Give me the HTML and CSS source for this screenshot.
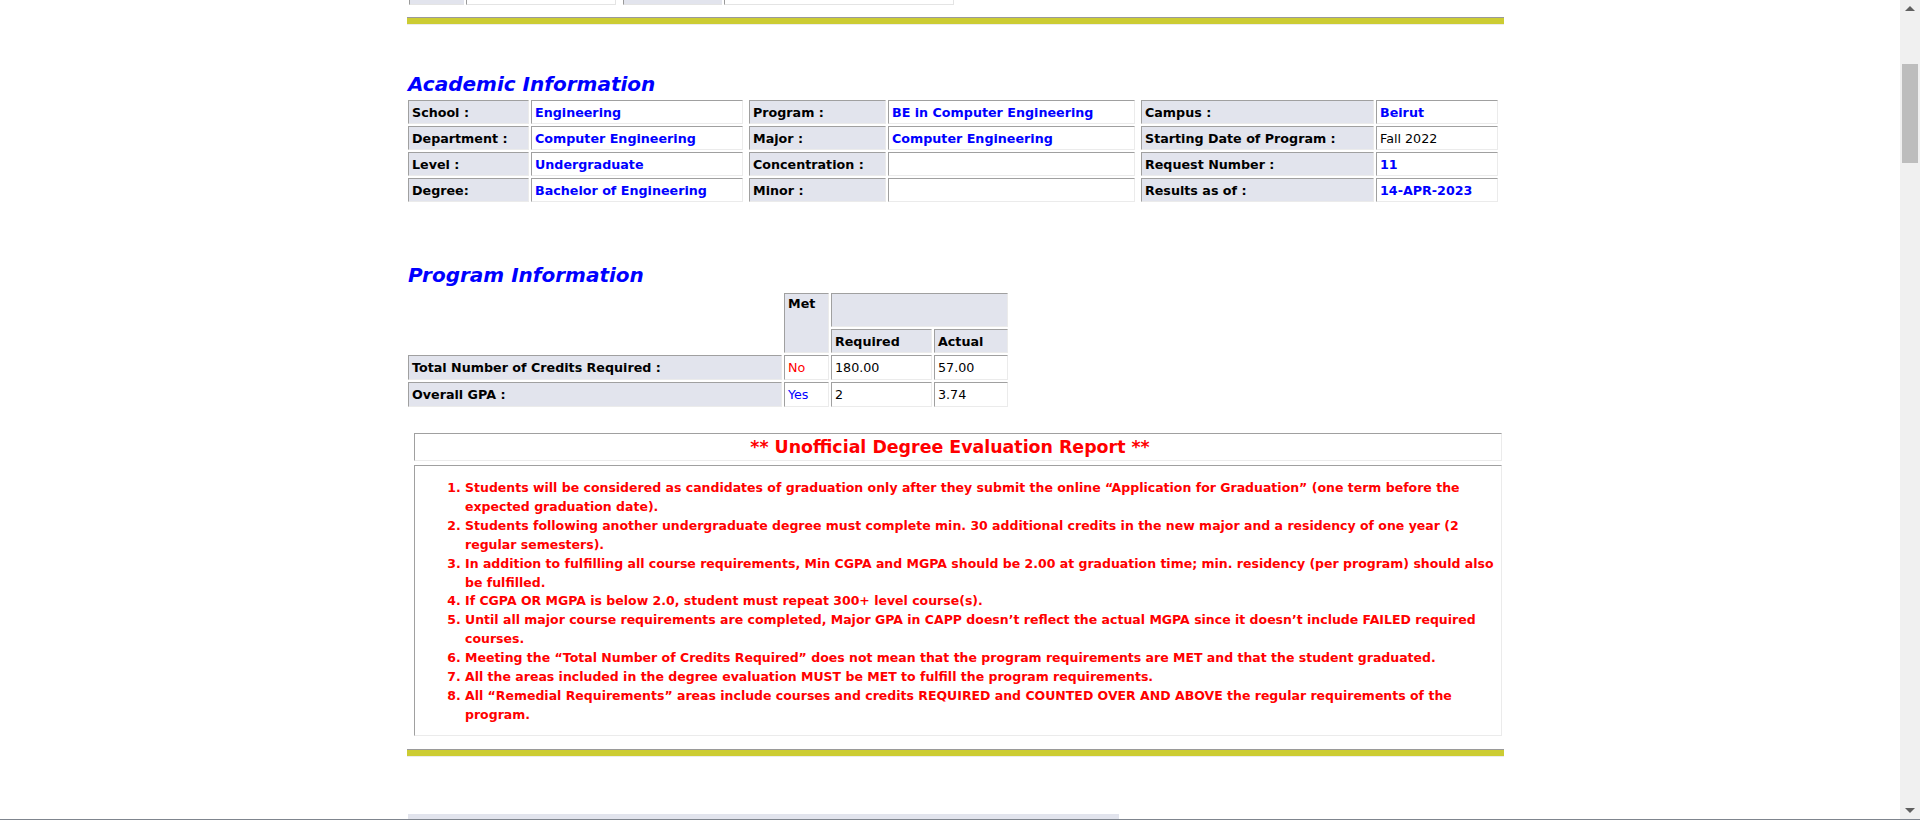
FILE: index.html
```html
<!DOCTYPE html>
<html lang="en">
<head>
<meta charset="utf-8">
<title>Degree Evaluation</title>
<link rel="stylesheet" href="styles.css">
</head>
<body>
<div class="window">
  <main class="page">
    <div class="content">
      <div class="prev-row">
        <span class="prev-cell label w1"></span>
        <span class="prev-cell value w2"></span>
        <span class="prev-cell label w3"></span>
        <span class="prev-cell value w4"></span>
      </div>
      <div class="rule rule-top"></div>

      <h2 class="section-title academic-title">Academic Information</h2>
      <table class="datatable academic">
        <colgroup>
          <col class="c-a1"><col class="c-a2"><col class="c-sp"><col class="c-a3"><col class="c-a4"><col class="c-sp"><col class="c-a5"><col class="c-a6">
        </colgroup>
        <tr>
          <th class="lbl">School :</th><td class="val hl">Engineering</td><td class="sp"></td>
          <th class="lbl">Program :</th><td class="val hl">BE in Computer Engineering</td><td class="sp"></td>
          <th class="lbl">Campus :</th><td class="val hl">Beirut</td>
        </tr>
        <tr>
          <th class="lbl">Department :</th><td class="val hl">Computer Engineering</td><td class="sp"></td>
          <th class="lbl">Major :</th><td class="val hl">Computer Engineering</td><td class="sp"></td>
          <th class="lbl">Starting Date of Program :</th><td class="val">Fall 2022</td>
        </tr>
        <tr>
          <th class="lbl">Level :</th><td class="val hl">Undergraduate</td><td class="sp"></td>
          <th class="lbl">Concentration :</th><td class="val"></td><td class="sp"></td>
          <th class="lbl">Request Number :</th><td class="val hl">11</td>
        </tr>
        <tr>
          <th class="lbl">Degree:</th><td class="val hl">Bachelor of Engineering</td><td class="sp"></td>
          <th class="lbl">Minor :</th><td class="val"></td><td class="sp"></td>
          <th class="lbl">Results as of :</th><td class="val hl">14-APR-2023</td>
        </tr>
      </table>

      <h2 class="section-title program-title">Program Information</h2>
      <table class="datatable program">
        <colgroup>
          <col class="c-p1"><col class="c-p2"><col class="c-p3"><col class="c-p4">
        </colgroup>
        <tr class="head-top">
          <th class="blank" rowspan="2"></th>
          <th class="lbl met" rowspan="2">Met</th>
          <th class="lbl" colspan="2"></th>
        </tr>
        <tr>
          <th class="lbl">Required</th>
          <th class="lbl">Actual</th>
        </tr>
        <tr class="data-row">
          <th class="lbl">Total Number of Credits Required :</th>
          <td class="val no">No</td>
          <td class="val">180.00</td>
          <td class="val">57.00</td>
        </tr>
        <tr class="data-row">
          <th class="lbl">Overall GPA :</th>
          <td class="val yes">Yes</td>
          <td class="val">2</td>
          <td class="val">3.74</td>
        </tr>
      </table>

      <section class="report">
        <div class="report-head">** Unofficial Degree Evaluation Report **</div>
        <div class="report-body">
          <ol class="report-list">
            <li>Students will be considered as candidates of graduation only after they submit the online “Application for Graduation” (one term before the expected graduation date).</li>
            <li>Students following another undergraduate degree must complete min. 30 additional credits in the new major and a residency of one year (2 regular semesters).</li>
            <li>In addition to fulfilling all course requirements, Min CGPA and MGPA should be 2.00 at graduation time; min. residency (per program) should also be fulfilled.</li>
            <li>If CGPA OR MGPA is below 2.0, student must repeat 300+ level course(s).</li>
            <li>Until all major course requirements are completed, Major GPA in CAPP doesn’t reflect the actual MGPA since it doesn’t include FAILED required courses.</li>
            <li>Meeting the “Total Number of Credits Required” does not mean that the program requirements are MET and that the student graduated.</li>
            <li>All the areas included in the degree evaluation MUST be MET to fulfill the program requirements.</li>
            <li>All “Remedial Requirements” areas include courses and credits REQUIRED and COUNTED OVER AND ABOVE the regular requirements of the program.</li>
          </ol>
        </div>
      </section>

      <div class="rule rule-bottom"></div>
      <div class="next-row"><span class="next-cell"></span></div>
    </div>
  </main>
  <div class="scrollbar" aria-hidden="true">
    <div class="sb-btn">
      <svg width="10" height="6" viewBox="0 0 10 6"><polygon points="0,5 5,0 10,5" fill="#606060"/></svg>
    </div>
    <div class="sb-thumb"></div>
    <div class="sb-fill"></div>
    <div class="sb-btn">
      <svg width="10" height="6" viewBox="0 0 10 6"><polygon points="0,0 10,0 5,5" fill="#606060"/></svg>
    </div>
  </div>
</div>
</body>
</html>
```

FILE: styles.css
```css
html, body {
  margin: 0;
  padding: 0;
  height: 100%;
  overflow: hidden;
  background: #ffffff;
}

body {
  font-family: "DejaVu Sans", Verdana, sans-serif;
  font-size: 12.7px;
  color: #000000;
}

.window {
  display: flex;
  height: 819px;
  border-bottom: 1px solid #7f858e;
}

.page {
  flex: 1;
  overflow: hidden;
}

.content {
  width: 1098px;
  margin-left: 406px;
}

/* tail of the previous table */
.prev-row {
  display: flex;
  height: 5px;
  padding-left: 3px;
}

.prev-cell {
  box-sizing: border-box;
  height: 5px;
  border-left: 1px solid #9a9a9a;
  border-bottom: 1px solid #e4e4e4;
}

.prev-cell.label { background: #e2e4ed; }
.prev-cell.value { border-right: 1px solid #e4e4e4; }
.prev-cell.w1 { width: 55px; margin-right: 2px; }
.prev-cell.w2 { width: 150px; margin-right: 7px; }
.prev-cell.w3 { width: 99px; margin-right: 2px; }
.prev-cell.w4 { width: 230px; }

/* yellow separator */
.rule {
  margin-left: 1px;
  width: 1097px;
  height: 6px;
  background: #cccc33;
  border-top: 1px solid #9a9a9a;
  border-bottom: 1px solid #ececec;
}

.rule-top { margin-top: 12px; }
.rule-bottom { margin-top: 13px; }

/* section headings */
.section-title {
  margin: 0 0 0 2px;
  font-size: 20px;
  line-height: 17px;
  font-weight: bold;
  font-style: italic;
  color: #0000ff;
}

.academic-title { margin-top: 51px; }
.program-title { margin-top: 63px; }

/* data tables */
.datatable {
  border-collapse: separate;
  border-spacing: 2px;
  table-layout: fixed;
}

.datatable tr { height: 24px; }

.datatable th,
.datatable td {
  padding: 0 3px;
  border-style: solid;
  border-width: 1px;
  border-color: #a0a0a0 #ebebeb #ebebeb #a0a0a0;
  text-align: left;
  vertical-align: middle;
  white-space: nowrap;
  overflow: hidden;
}

.datatable .lbl {
  background: #e2e4ed;
  font-weight: bold;
}

.datatable .val {
  background: #ffffff;
  font-weight: normal;
}

.datatable .val.hl {
  color: #0000ff;
  font-weight: bold;
}

.datatable .sp,
.datatable .blank {
  border: 0;
  padding: 0;
  background: transparent;
}

.academic { width: 1094px; margin-top: 5px; }
.c-a1 { width: 121px; }
.c-a2 { width: 212px; }
.c-sp { width: 2px; }
.c-a3 { width: 137px; }
.c-a4 { width: 247px; }
.c-a5 { width: 233px; }
.c-a6 { width: 122px; }

.program { width: 604px; margin-top: 7px; }
.program .head-top { height: 34px; }
.program .data-row { height: 25px; }
.c-p1 { width: 374px; }
.c-p2 { width: 45px; }
.c-p3 { width: 101px; }
.c-p4 { width: 74px; }

.datatable .met {
  vertical-align: top;
  padding-top: 2px;
}

.datatable .no { color: #ff0000; }
.datatable .yes { color: #0000ff; }

/* report notice */
.report {
  margin: 24px 0 0 8px;
  width: 1088px;
}

.report-head,
.report-body {
  box-sizing: border-box;
  border-style: solid;
  border-width: 1px;
  border-color: #a0a0a0 #ebebeb #ebebeb #a0a0a0;
}

.report-head {
  height: 28px;
  line-height: 26px;
  padding-right: 16px;
  text-align: center;
  color: #ff0000;
  font-size: 17.4px;
  font-weight: bold;
}

.report-body {
  margin-top: 4px;
  height: 271px;
}

.report-list {
  margin: 0;
  padding: 13px 4px 0 50px;
  color: #ff0000;
  font-size: 12.5px;
  font-weight: bold;
  line-height: 18.9px;
}

.next-row {
  margin: 57px 0 0 2px;
  display: flex;
}

.next-cell {
  width: 711px;
  height: 6px;
  background: #e2e4ed;
}

/* scrollbar */
.scrollbar {
  width: 20px;
  background: #f0f0f0;
  display: flex;
  flex-direction: column;
}

.sb-btn {
  height: 17px;
  display: flex;
  align-items: center;
  justify-content: center;
}

.sb-thumb {
  margin: 47px 0 0 2px;
  width: 16px;
  height: 99px;
  background: #bdbdbd;
}

.sb-fill { flex: 1; }
```
